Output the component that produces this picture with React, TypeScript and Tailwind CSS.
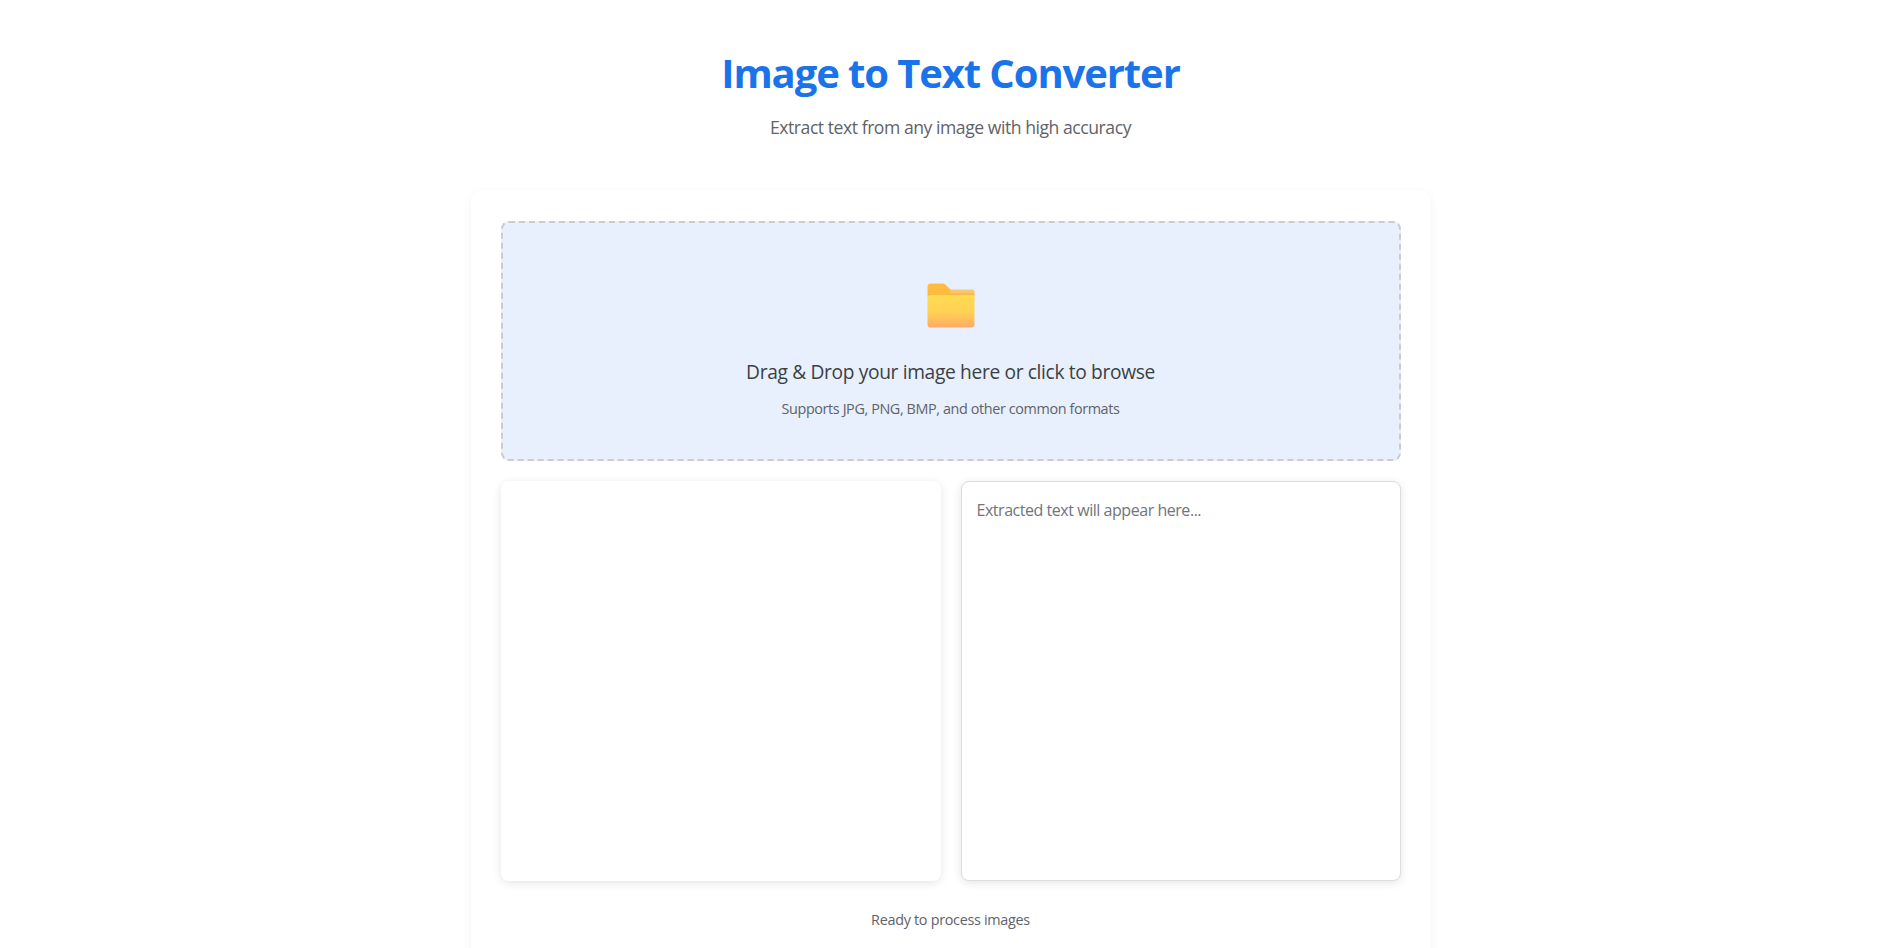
import React from "react";

const font = "font-['Open_Sans','Noto_Sans',sans-serif]";

const FolderIcon = () => (
  <svg width="48" height="48" viewBox="0 0 48 48" fill="none">
    <defs>
      <linearGradient id="folderFront" x1="0" y1="0" x2="0" y2="1">
        <stop offset="0" stopColor="#ffdc50" />
        <stop offset="0.55" stopColor="#ffd056" />
        <stop offset="1" stopColor="#ffa966" />
      </linearGradient>
    </defs>
    <path
      d="M0.500 3.500C0.500 1.500 1.700 0.500 3.500 0.500H16C17 0.500 17.600 0.800 18.200 1.400L24 7H44.500C46.500 7 47.500 8.200 47.500 10V14H0.500Z"
      fill="#ffbb40"
    />
    <path d="M23 6.500H44.500C46.500 6.500 47.500 7.700 47.500 9.500V10H24Z" fill="#f8c675" />
    <path
      d="M0.500 14.500C0.500 12.800 1.500 12 3.500 12H44.500C46.500 12 47.500 12.800 47.500 14.500V41C47.500 43 46.500 44.500 44.500 44.500H3.500C1.500 44.500 0.500 43 0.500 41Z"
      fill="url(#folderFront)"
    />
  </svg>
);

export default function App() {
  return (
    <div className={`h-[948px] bg-white overflow-hidden ${font}`}>
      <div className="flex flex-col items-center">
        <header className="shrink-0 pt-[49px] text-center h-[190px]">
          <h1 className="text-[40px] leading-[48px] font-bold text-[#1a73e8] tracking-[-1.1px]">
            Image to Text Converter
          </h1>
          <p className="mt-[17px] text-[17.6px] leading-[26px] text-[#5f6368] tracking-[-0.46px]">
            Extract text from any image with high accuracy
          </p>
        </header>

        <main className="w-[960px] rounded-t-xl bg-white px-[30px] pt-[31px] pb-[30px] shadow-[0_2px_10px_rgba(0,0,0,0.05)]">
          <div className="h-[240px] rounded-lg border-2 border-dashed border-[#cccccc] bg-[#e8f0fe] flex flex-col items-center">
            <div className="mt-[60px]">
              <FolderIcon />
            </div>
            <p className="mt-[28px] text-[19.2px] leading-[26px] text-[#3c4043] tracking-[-0.35px]">
              Drag &amp; Drop your image here or click to browse
            </p>
            <p className="mt-[14px] text-[14.4px] leading-[20px] text-[#5f6368] tracking-[-0.39px]">
              Supports JPG, PNG, BMP, and other common formats
            </p>
          </div>

          <div className="mt-[20px] grid grid-cols-2 gap-5 h-[400px]">
            <div className="rounded-lg bg-white shadow-[0_2px_10px_rgba(0,0,0,0.1)]" />
            <div className="rounded-lg border border-[#dddddd] bg-white px-[15px] pt-[16px] text-base leading-6 text-[#70757a] tracking-[-0.46px] shadow-[0_2px_10px_rgba(0,0,0,0.1)]">
              Extracted text will appear here...
            </div>
          </div>

          <p className="mt-[29px] text-center text-[14.4px] leading-5 text-[#5f6368] tracking-[-0.3px]">
            Ready to process images
          </p>
        </main>
      </div>
    </div>
  );
}
